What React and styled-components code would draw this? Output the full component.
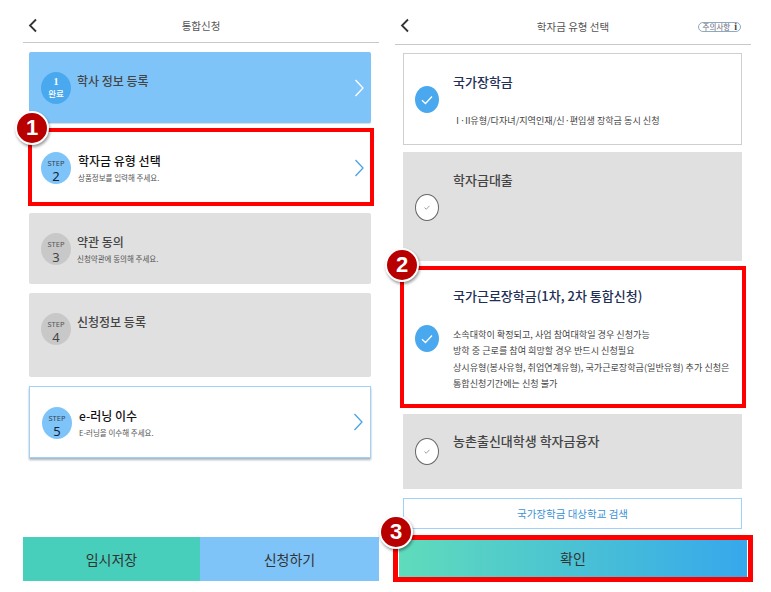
import React from "react";
import styled, { createGlobalStyle } from "styled-components";

const Global = createGlobalStyle`
  html, body { margin: 0; padding: 0; background: #fff; }
  body { font-family: "Noto Sans CJK KR", "Noto Sans", sans-serif; }
  * { box-sizing: border-box; }
`;

const Page = styled.div`
  display: grid;
  grid-template-columns: 356px 356px;
  column-gap: 16px;
  padding-left: 23px;
  width: 771px;
  height: 592px;
  overflow: hidden;
`;

const Screen = styled.div`
  display: flex;
  flex-direction: column;
  height: 581px;
`;

const Header = styled.div`
  position: relative;
  display: flex;
  align-items: center;
  justify-content: center;
  height: ${(p) => p.$h}px;
  flex: none;
  border-bottom: 1px solid #c8c8c8;
  padding-top: 8px;
  font-size: 10.5px;
  color: #555;
`;

const BackIcon = styled.svg`
  position: absolute;
  left: 5px;
  top: 18px;
  width: 10px;
  height: 15px;
`;

const Notice = styled.div`
  position: absolute;
  right: 10px;
  top: 22px;
  display: flex;
  align-items: center;
  gap: 4px;
  height: 10px;
  padding: 0 3px 0 4px;
  border: 1px solid #8fa9bd;
  border-radius: 6px;
  font-size: 7.5px;
  line-height: 8px;
  color: #667;
`;

const NoticeI = styled.span`
  font-family: "Liberation Serif", serif;
  font-size: 10px;
  line-height: 8px;
  font-weight: 700;
  color: #444;
`;

const StepList = styled.div`
  display: flex;
  flex-direction: column;
  gap: 9px;
  padding: 9px 8px 0 6px;
`;

const skin = {
  done: "background:#7fc4f9;border-radius:2px;box-shadow:0 1px 1px rgba(0,0,0,.15);",
  active: "background:#fff;",
  outlined: "background:#fff;border:1px solid #9fd2f8;box-shadow:0 2px 2px rgba(70,90,110,.45);",
  idle: "background:#e0e0e0;border-radius:2px;",
};

const StepCard = styled.div`
  position: relative;
  display: flex;
  align-items: flex-start;
  height: ${(p) => p.$h}px;
  padding: 20px 8px 0 12px;
  ${(p) => skin[p.$kind]}
`;

const StepCircle = styled.div`
  display: flex;
  flex-direction: column;
  align-items: center;
  justify-content: flex-start;
  flex: none;
  width: 30px;
  height: 32px;
  padding-top: ${(p) => p.$pt}px;
  border-radius: 50%;
  background: ${(p) => p.$bg};
  color: ${(p) => p.$fg};
`;

const StepLabel = styled.span`
  font-size: 7.5px;
  line-height: 10px;
  font-family: "Noto Sans", sans-serif;
  color: ${(p) => p.$c};
`;

const StepNum = styled.span`
  font-size: 13px;
  line-height: 16px;
  font-family: "Noto Sans", sans-serif;
`;

const DoneNum = styled.span`
  font-family: "Liberation Serif", serif;
  font-weight: 700;
  font-size: 10px;
  line-height: 11px;
  color: #fff;
`;

const DoneText = styled.span`
  font-size: 8.5px;
  line-height: 12px;
  font-weight: 500;
  color: #fff;
`;

const StepBody = styled.div`
  display: flex;
  flex-direction: column;
  margin-left: ${(p) => (p.$tight ? 7 : 6)}px;
`;

const StepTitle = styled.div`
  font-size: 12px;
  line-height: 17px;
  font-weight: 500;
  color: ${(p) => p.$c};
`;

const StepSub = styled.div`
  font-size: 7.5px;
  line-height: 11px;
  margin-top: 3px;
  color: #555;
`;

const Arrow = styled.svg`
  position: absolute;
  right: 7px;
  top: 50%;
  margin-top: -9px;
  width: 10px;
  height: 18px;
`;

const Frame = styled.div`
  position: absolute;
  left: ${(p) => p.$l}px;
  right: ${(p) => p.$r}px;
  top: ${(p) => p.$t}px;
  bottom: ${(p) => p.$b}px;
  border: ${(p) => p.$w || 4}px solid #f00;
  pointer-events: none;
`;

const Badge = styled.div`
  position: absolute;
  left: ${(p) => p.$x}px;
  top: ${(p) => p.$y}px;
  z-index: 2;
  width: 34px;
  height: 34px;
  display: flex;
  align-items: center;
  justify-content: center;
  border-radius: 50%;
  background: #b80000;
  border: 2px solid #fff;
  box-shadow: 1px 2px 3px rgba(0, 0, 0, 0.4);
  color: #fff;
  font-family: "Liberation Sans", sans-serif;
  font-weight: 700;
  font-size: 22px;
`;

const BottomBar = styled.div`
  display: grid;
  grid-template-columns: 177px 179px;
  margin-top: auto;
  height: 44px;
`;

const BarButton = styled.div`
  display: flex;
  align-items: center;
  justify-content: center;
  background: ${(p) => p.$bg};
  font-size: 14px;
  color: #333;
`;

const TypeList = styled.div`
  display: flex;
  flex-direction: column;
  padding: 8px 9px 0 8px;
`;

const TypeCard = styled.div`
  position: relative;
  display: grid;
  grid-template-columns: ${(p) => (p.$border ? 49 : 50)}px 1fr;
  grid-template-rows: auto 1fr;
  height: ${(p) => p.$h}px;
  margin-top: ${(p) => p.$mt || 0}px;
  padding-top: ${(p) => p.$pt}px;
  background: ${(p) => (p.$on ? "#fff" : "#e0e0e0")};
  border: ${(p) => (p.$border ? "1px solid #cfcfcf" : "none")};
`;

const CheckWrap = styled.div`
  grid-row: 1 / span 2;
  display: flex;
  justify-content: flex-start;
  padding-left: ${(p) => p.$left ?? 12}px;
  padding-top: ${(p) => p.$top}px;
`;

const CheckCircle = styled.div`
  display: flex;
  align-items: center;
  justify-content: center;
  width: 24px;
  height: 27px;
  border-radius: 50%;
  background: ${(p) => (p.$on ? "#4aa8ef" : "#fff")};
  border: ${(p) => (p.$on ? "none" : "1px solid #666")};
`;

const TypeTitle = styled.div`
  font-size: 13px;
  line-height: 18px;
  font-weight: 500;
  color: ${(p) => (p.$on ? "#1f2f55" : "#444")};
`;

const TypeDesc = styled.div`
  font-size: 9.1px;
  line-height: 16.3px;
  color: #444;
  margin-top: ${(p) => p.$mt}px;
  white-space: nowrap;
`;

const Roman = styled.span`
  letter-spacing: -2px;
`;

const SearchButton = styled.div`
  display: flex;
  align-items: center;
  justify-content: center;
  height: 31px;
  margin-top: 9px;
  border: 1px solid #9fd2f8;
  font-size: 10.5px;
  color: #3a93d6;
`;

const Confirm = styled.div`
  position: relative;
  display: flex;
  align-items: center;
  justify-content: center;
  height: 38px;
  margin: auto 4px 4px 4px;
  background: linear-gradient(90deg, #5fdcbb, #36a8ec);
  font-size: 14px;
  color: #333;
`;

const Chevron = ({ c = "#fff" }) => (
  <Arrow viewBox="0 0 10 18" fill="none">
    <path d="M1.5 1 L9 9 L1.5 17" stroke={c} strokeWidth="1.3" />
  </Arrow>
);

const Back = () => (
  <BackIcon viewBox="0 0 10 15" fill="none">
    <path d="M8 1.5 L2 7.5 L8 13.5" stroke="#333" strokeWidth="1.8" />
  </BackIcon>
);

const Tick = ({ on }) =>
  on ? (
    <svg width="12" height="10" viewBox="0 0 12 10" fill="none">
      <path d="M1 5.2 L4.5 8.5 L11 1.5" stroke="#fff" strokeWidth="1.3" />
    </svg>
  ) : (
    <svg width="6" height="5" viewBox="0 0 6 5" fill="none">
      <path d="M0.5 2.6 L2.3 4.2 L5.5 0.8" stroke="#888" strokeWidth="0.8" />
    </svg>
  );

const Step = ({ n, title, sub, kind, h, arrow, children }) => {
  const idle = kind === "idle";
  return (
    <StepCard $kind={kind} $h={h}>
      <StepCircle $pt={6} $bg={idle ? "#c8c8c8" : "#7fc4f9"} $fg={idle ? "#444" : "#123"}>
        <StepLabel $c={idle ? "#555" : "#345"}>STEP</StepLabel>
        <StepNum>{n}</StepNum>
      </StepCircle>
      <StepBody $tight={!idle}>
        <StepTitle $c={idle ? "#444" : "#111"}>{title}</StepTitle>
        {sub && <StepSub>{sub}</StepSub>}
      </StepBody>
      {arrow && <Chevron c="#4aa3e8" />}
      {children}
    </StepCard>
  );
};

export default function App() {
  return (
    <>
      <Global />
      <Page>
        <Screen>
          <Header $h={43}>
            <Back />
            통합신청
          </Header>
          <StepList>
            <StepCard $kind="done" $h={71}>
              <StepCircle $pt={4} $bg="#4aa8ef" $fg="#fff">
                <DoneNum>1</DoneNum>
                <DoneText>완료</DoneText>
              </StepCircle>
              <StepBody>
                <StepTitle $c="#444">학사 정보 등록</StepTitle>
              </StepBody>
              <Chevron />
            </StepCard>
            <Step n="2" kind="active" h={72} arrow title="학자금 유형 선택" sub="상품정보를 입력해 주세요.">
              <Frame $l={-1} $r={-3} $t={-4} $b={-2} />
              <Badge $x={-14} $y={-21}>1</Badge>
            </Step>
            <Step n="3" kind="idle" h={71} title="약관 동의" sub="신청약관에 동의해 주세요." />
            <Step n="4" kind="idle" h={84} title="신청정보 등록" />
            <Step n="5" kind="outlined" h={72} arrow title="e-러닝 이수" sub="E-러닝을 이수해 주세요." />
          </StepList>
          <BottomBar>
            <BarButton $bg="#48cfbb">임시저장</BarButton>
            <BarButton $bg="#7fc4f9">신청하기</BarButton>
          </BottomBar>
        </Screen>

        <Screen>
          <Header $h={45}>
            <Back />
            학자금 유형 선택
            <Notice>
              주의사항<NoticeI>i</NoticeI>
            </Notice>
          </Header>
          <TypeList>
            <TypeCard $on $border $h={92} $pt={19}>
              <CheckWrap $top={13} $left={11}>
                <CheckCircle $on><Tick on /></CheckCircle>
              </CheckWrap>
              <TypeTitle $on>국가장학금</TypeTitle>
              <TypeDesc $mt={21}><Roman>Ⅰ·Ⅱ</Roman>유형/다자녀/지역인재/신·편입생 장학금 동시 신청</TypeDesc>
            </TypeCard>
            <TypeCard $h={109} $mt={7} $pt={19}>
              <CheckWrap $top={23}>
                <CheckCircle><Tick /></CheckCircle>
              </CheckWrap>
              <TypeTitle>학자금대출</TypeTitle>
            </TypeCard>
            <TypeCard $on $h={130} $mt={11} $pt={15}>
              <Frame $l={-3} $r={-4} $t={-6} $b={-6} />
              <Badge $x={-18} $y={-24}>2</Badge>
              <CheckWrap $top={38}>
                <CheckCircle $on><Tick on /></CheckCircle>
              </CheckWrap>
              <TypeTitle $on>국가근로장학금(1차, 2차 통합신청)</TypeTitle>
              <TypeDesc $mt={21}>
                소속대학이 확정되고, 사업 참여대학일 경우 신청가능
                <br />
                방학 중 근로를 참여 희망할 경우 반드시 신청필요
                <br />
                상시유형(봉사유형, 취업연계유형), 국가근로장학금(일반유형) 추가 신청은
                <br />
                통합신청기간에는 신청 불가
              </TypeDesc>
            </TypeCard>
            <TypeCard $h={75} $mt={12} $pt={18}>
              <CheckWrap $top={6}>
                <CheckCircle><Tick /></CheckCircle>
              </CheckWrap>
              <TypeTitle>농촌출신대학생 학자금융자</TypeTitle>
            </TypeCard>
            <SearchButton>국가장학금 대상학교 검색</SearchButton>
          </TypeList>
          <Confirm>
            <Frame $l={-6} $r={-6} $t={-4} $b={-5} $w={5} />
            <Badge $x={-20} $y={-24}>3</Badge>
            확인
          </Confirm>
        </Screen>
      </Page>
    </>
  );
}
